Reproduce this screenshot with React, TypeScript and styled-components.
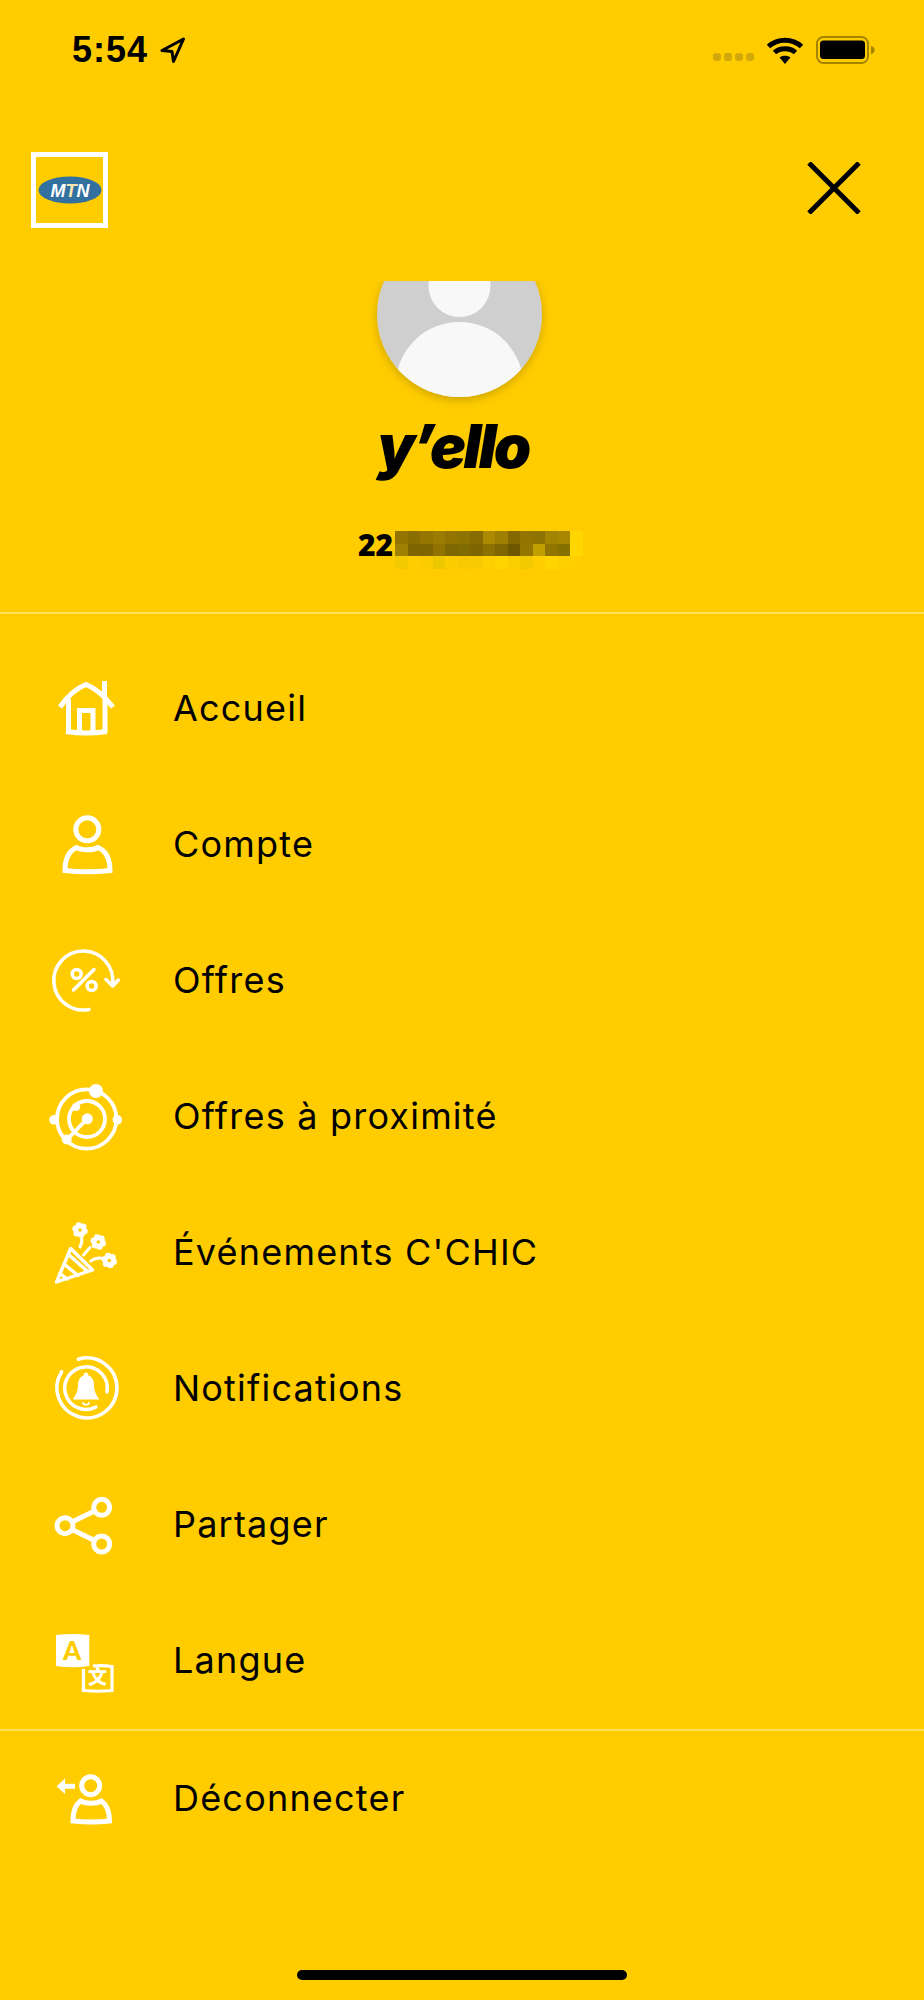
import React from "react";
import styled, { createGlobalStyle } from "styled-components";

const Global = createGlobalStyle`
  html, body { margin: 0; padding: 0; background: #ffcc00; }
  #root { width: 924px; height: 2000px; }
`;

const Page = styled.div`
  width: 924px;
  height: 2000px;
  background: #ffcc00;
  display: flex;
  flex-direction: column;
  font-family: Inter, "Open Sans", sans-serif;
  color: #000;
  overflow: hidden;
`;

const StatusBar = styled.div`
  height: 100px;
  box-sizing: border-box;
  padding: 0 48px 0 72px;
  display: flex;
  align-items: center;
`;

const Time = styled.span`
  font-family: "Liberation Sans", Arial, sans-serif;
  font-weight: 700;
  font-size: 36px;
  line-height: 40px;
  letter-spacing: 1px;
  width: 88px;
`;

const Spacer = styled.div`
  flex: 1;
`;

const SignalDots = styled.div`
  display: flex;
  gap: 3px;
  margin: 13px 13px 0 0;
`;

const SignalDot = styled.i`
  display: block;
  width: 8px;
  height: 8px;
  border-radius: 3px;
  background: #d3a90a;
`;

const Header = styled.div`
  height: 181px;
  box-sizing: border-box;
  padding: 52px 63px 0 31px;
  display: flex;
  justify-content: space-between;
  align-items: flex-start;
`;

const LogoFrame = styled.div`
  width: 77px;
  height: 76px;
  box-sizing: border-box;
  border: 5px solid #fff;
  display: flex;
  align-items: center;
  justify-content: center;
`;

const CloseIcon = styled.svg`
  margin-top: 10px;
  display: block;
`;

const Profile = styled.div`
  height: 331px;
  display: flex;
  flex-direction: column;
  align-items: center;
`;

const AvatarArt = styled.svg`
  display: block;
  flex: none;
`;

const Brand = styled.div`
  font-family: Inter, sans-serif;
  font-style: italic;
  font-weight: 900;
  font-size: 60px;
  line-height: 62px;
  letter-spacing: -2.6px;
  margin-top: 4px;
  padding-right: 18px;
`;

const MsisdnRow = styled.div`
  align-self: stretch;
  box-sizing: border-box;
  padding-left: 358px;
  margin-top: 53px;
  display: flex;
  align-items: flex-start;
`;

const Prefix = styled.span`
  font-family: "Open Sans", sans-serif;
  font-weight: 800;
  font-size: 30px;
  line-height: 30px;
  width: 37px;
  flex: none;
`;

const Mosaic = styled.div`
  display: grid;
  grid-template-columns: repeat(15, 12.5px);
  grid-auto-rows: 12.5px;
  margin-top: 1px;
`;

const MosaicCell = styled.i<{ $c: string }>`
  display: block;
  background: ${(p) => p.$c};
`;

const Divider = styled.div`
  height: 2px;
  background: #ffe15c;
  flex: none;
`;

const Menu = styled.nav`
  padding-top: 27px;
  display: flex;
  flex-direction: column;
`;

const Row = styled.div`
  height: 136px;
  box-sizing: border-box;
  padding-left: 47px;
  display: flex;
  align-items: center;
  gap: 46px;
`;

const Label = styled.span`
  font-family: Inter, sans-serif;
  font-weight: 400;
  font-size: 36px;
  line-height: 40px;
  letter-spacing: 1.2px;
  margin-top: -3px;
`;

const Icon = styled.svg.attrs({ viewBox: "0 0 80 80", width: 80, height: 80 })<{ $w?: number }>`
  display: block;
  flex: none;
  fill: none;
  stroke: #fff;
  stroke-width: ${(p) => p.$w ?? 5};
`;

const HomeBar = styled.div`
  width: 330px;
  height: 10px;
  border-radius: 5px;
  background: #000;
  align-self: center;
  margin-top: 103px;
`;

const row1 = ["#937400","#8a6e00","#937500","#9b7c00","#927400","#8d7300","#866c00","#ab8900","#9f7f00","#836800","#927500","#8f7300","#a38400","#a98800","#ffd600"];
const row2 = ["#a08000","#7f6500","#7f6500","#917300","#7e6600","#7f6c00","#7e6500","#8c7000","#7f6600","#6e5700","#957700","#bfa000","#927500","#857000","#ffd600"];
const row3 = ["#f3c900","#ffcd00","#fbcb00","#edc800","#fccb00","#f8c900","#f7cb00","#ffcf00","#ffd500","#fbce00","#f2ca00","#ffcd00","#ffd500","#ffd000","#ffcd00"];

const Flower = ({ x, y }: { x: number; y: number }) => (
  <g stroke="none">
    {[0, 60, 120, 180, 240, 300].map((a) => (
      <circle
        key={a}
        cx={x + 4.6 * Math.cos(((a + 15) * Math.PI) / 180)}
        cy={y + 4.6 * Math.sin(((a + 15) * Math.PI) / 180)}
        r={3.2}
        fill="#fff"
      />
    ))}
    <circle cx={x} cy={y} r={3.6} fill="#fff" />
    <circle cx={x} cy={y} r={1.8} fill="#ffcc00" />
  </g>
);

const HomeIcon = () => (
  <Icon>
    <path d="M13 38C20 28 30 19 39 15.5C48 19 58 28 66 38" />
    <path d="M57.5 12V28M21.5 30V63M58 30V63" />
    <path d="M19 62.5C32 64.5 46 64.5 60 62.5" />
    <path d="M32.5 62V41.5H46V62" />
  </Icon>
);

const PersonIcon = () => (
  <Icon>
    <circle cx="40.3" cy="24.3" r="11.5" />
    <path d="M29.5 42.5C34 45.5 46 45.5 51 42.5C59 46 63 54 63 65.5C50 67 31 67 18 65.5C18 54 22 46 29.5 42.5Z" />
  </Icon>
);

const OffersIcon = () => (
  <Icon $w={3.5} strokeLinecap="round" strokeLinejoin="round">
    <path d="M42 68.5A29.5 29.5 0 1 1 65.6 43" />
    <path d="M59 38.5L65.7 45L71.3 39" />
    <path d="M26.5 49L47 28.5" />
    <circle cx="29.7" cy="33" r="4.5" />
    <circle cx="44.7" cy="45" r="4.5" />
  </Icon>
);

const RadarIcon = () => (
  <Icon $w={3.8}>
    <circle cx="39.7" cy="42" r="29.7" />
    <circle cx="40" cy="42" r="18" />
    <path d="M40 42L20 62.5" />
    <g fill="#fff" stroke="none">
      <circle cx="49" cy="14" r="7" />
      <circle cx="7" cy="42.8" r="4.8" />
      <circle cx="70.3" cy="42.8" r="4.8" />
      <circle cx="19.7" cy="62.5" r="5" />
      <circle cx="29" cy="30" r="4" />
      <circle cx="40.3" cy="41.8" r="5.5" />
    </g>
  </Icon>
);

const PartyIcon = () => (
  <Icon $w={3.4} strokeLinecap="round" strokeLinejoin="round">
    <path d="M9.5 69L23.7 35.5L45.5 57Z" />
    <path d="M21.5 41.5L39.5 57.5M17 51L31 62.5M13 60.5L20 66" />
    <path d="M34.7 25.5C35.2 28 34.5 31 33 34M43 34.5L36.5 42M54.5 45.2C51 44.6 47 45.6 43.7 48" strokeWidth="3" />
    <Flower x={33} y={17} />
    <Flower x={51.3} y={29} />
    <Flower x={62.3} y={47.5} />
  </Icon>
);

const BellIcon = () => (
  <Icon $w={3.5} strokeLinecap="round">
    <path d="M31.3 10.2A30 30 0 1 1 14.7 22.7" />
    <path d="M49 58A21.3 21.3 0 1 1 60 43" />
    <path
      fill="#fff"
      stroke="none"
      d="M39 23.5C37.5 23.5 36.5 24.8 36.6 26.4C33 27.6 31 31 31 36C31 43 28.5 46 25.8 50.5H52.2C49.5 46 47 43 47 36C47 31 45 27.6 41.4 26.4C41.5 24.8 40.5 23.5 39 23.5Z"
    />
    <path strokeWidth="1.6" d="M36 53.5C36.5 56.5 41.5 56.5 42 53.5" />
  </Icon>
);

const ShareIcon = () => (
  <Icon>
    <circle cx="54.7" cy="22.3" r="8" />
    <circle cx="54.7" cy="59" r="8" />
    <circle cx="18" cy="40.7" r="8" />
    <path d="M25 37L47.5 26M25 44.5L47.5 55.5" />
  </Icon>
);

const GlyphA = styled.text`
  font-family: Lato, sans-serif;
  font-weight: 900;
  font-size: 26px;
  fill: #ffcc00;
  stroke: none;
`;

const GlyphWen = styled.text`
  font-family: "Noto Sans CJK SC", sans-serif;
  font-weight: 900;
  font-size: 19px;
  fill: #fff;
  stroke: none;
`;

const LanguageIcon = () => (
  <Icon $w={3.2}>
    <path
      fill="#fff"
      stroke="none"
      d="M9 14C20 12.6 31 12.6 42.3 14V45C31 46.6 20 46.6 9 45Z"
    />
    <GlyphA x="16" y="39">A</GlyphA>
    <path d="M36.5 48V69.5Q51 71 65 69.5V45.5Q55 44 46 45" />
    <GlyphWen x="41" y="62.5">文</GlyphWen>
  </Icon>
);

const LogoutIcon = () => (
  <Icon>
    <circle cx="43.7" cy="26.7" r="9" />
    <path d="M33.5 42C39 45 49 45 54.5 42C60 46 62.5 53 62.5 62C50 63.5 38 63.5 26 62C26 53 28 46 33.5 42Z" />
    <path d="M28 27.3H14" />
    <path fill="#fff" stroke="none" d="M9.5 27.3L18 19.5V35Z" />
  </Icon>
);

const items: [React.ComponentType, string][] = [
  [HomeIcon, "Accueil"],
  [PersonIcon, "Compte"],
  [OffersIcon, "Offres"],
  [RadarIcon, "Offres à proximité"],
  [PartyIcon, "Événements C'CHIC"],
  [BellIcon, "Notifications"],
  [ShareIcon, "Partager"],
  [LanguageIcon, "Langue"],
];

export default function App() {
  return (
    <Page>
      <Global />
      <StatusBar>
        <Time>5:54</Time>
        <svg width="26" height="28" viewBox="0 0 26 28" fill="none" stroke="#000" strokeWidth="3" strokeLinejoin="round">
          <path d="M23.5 3L2 14.5L12 15.5L13.5 25.5Z" />
        </svg>
        <Spacer />
        <SignalDots>
          <SignalDot /><SignalDot /><SignalDot /><SignalDot />
        </SignalDots>
        <svg width="36" height="27" viewBox="0 0 36 27" fill="none" stroke="#000" strokeWidth="5">
          <path d="M1.5 9.5C10.5 1 25.5 1 34.5 9.5" />
          <path d="M7.5 15.5C13 10.5 23 10.5 28.5 15.5" />
          <path fill="#000" stroke="none" d="M18 27L12.5 20.5C15.5 18 20.5 18 23.5 20.5Z" />
        </svg>
        <svg width="60" height="28" viewBox="0 0 60 28" style={{ marginLeft: 13 }}>
          <rect x="1" y="1" width="51" height="26" rx="6.5" fill="none" stroke="#a58400" strokeWidth="2" />
          <rect x="4" y="4.5" width="45" height="18.5" rx="3.5" fill="#000" />
          <path d="M55 10C57.5 10.5 58.5 12 58.5 14C58.5 16 57.5 17.5 55 18Z" fill="#a58400" />
        </svg>
      </StatusBar>

      <Header>
        <LogoFrame>
          <svg width="64" height="28" viewBox="0 0 64 28">
            <ellipse cx="32" cy="14" rx="31.5" ry="13.5" fill="#31709f" />
            <text x="32" y="20.5" textAnchor="middle" fontFamily="'Liberation Sans', sans-serif" fontStyle="italic" fontWeight="700" fontSize="18" fill="#fff">
              M<tspan fill="#ffe9b0">T</tspan>N
            </text>
          </svg>
        </LogoFrame>
        <CloseIcon width="54" height="52" viewBox="0 0 54 52" stroke="#000" strokeWidth="5">
          <path d="M2 1L52 51M52 1L2 51" />
        </CloseIcon>
      </Header>

      <Profile>
        <AvatarArt width="200" height="130" viewBox="0 0 200 130">
          <defs>
            <clipPath id="disc"><circle cx="97.5" cy="33.5" r="82.5" /></clipPath>
            <filter id="soft" x="-20%" y="-20%" width="140%" height="140%">
              <feDropShadow dx="0" dy="3" stdDeviation="4" floodColor="#000" floodOpacity="0.2" />
            </filter>
          </defs>
          <circle cx="97.5" cy="33.5" r="82.5" fill="#cfcfcf" filter="url(#soft)" />
          <g clipPath="url(#disc)" fill="#f8f8f8">
            <circle cx="97.5" cy="5" r="31" />
            <circle cx="97.5" cy="105" r="64" />
          </g>
        </AvatarArt>
        <Brand>y’ello</Brand>
        <MsisdnRow>
          <Prefix>22</Prefix>
          <Mosaic>
            {[...row1, ...row2, ...row3].map((c, i) => (
              <MosaicCell key={i} $c={c} />
            ))}
          </Mosaic>
        </MsisdnRow>
      </Profile>
      <Divider />

      <Menu>
        {items.map(([Glyph, text]) => (
          <Row key={text}>
            <Glyph />
            <Label>{text}</Label>
          </Row>
        ))}
      </Menu>
      <Divider />
      <Row>
        <LogoutIcon />
        <Label>Déconnecter</Label>
      </Row>
      <HomeBar />
    </Page>
  );
}
